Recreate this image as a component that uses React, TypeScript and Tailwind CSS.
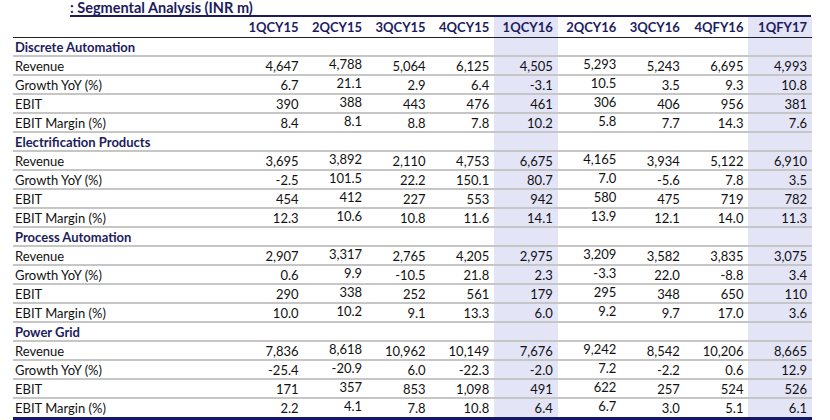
const COLS = ["1QCY15", "2QCY15", "3QCY15", "4QCY15", "1QCY16", "2QCY16", "3QCY16", "4QFY16", "1QFY17"];
const HIGHLIGHT = [4, 8];

type Segment = { name: string; rows: [string, string[]][] };

const SEGMENTS: Segment[] = [
  {
    name: "Discrete Automation",
    rows: [
      ["Revenue", ["4,647", "4,788", "5,064", "6,125", "4,505", "5,293", "5,243", "6,695", "4,993"]],
      ["Growth YoY (%)", ["6.7", "21.1", "2.9", "6.4", "-3.1", "10.5", "3.5", "9.3", "10.8"]],
      ["EBIT", ["390", "388", "443", "476", "461", "306", "406", "956", "381"]],
      ["EBIT Margin (%)", ["8.4", "8.1", "8.8", "7.8", "10.2", "5.8", "7.7", "14.3", "7.6"]],
    ],
  },
  {
    name: "Electrification Products",
    rows: [
      ["Revenue", ["3,695", "3,892", "2,110", "4,753", "6,675", "4,165", "3,934", "5,122", "6,910"]],
      ["Growth YoY (%)", ["-2.5", "101.5", "22.2", "150.1", "80.7", "7.0", "-5.6", "7.8", "3.5"]],
      ["EBIT", ["454", "412", "227", "553", "942", "580", "475", "719", "782"]],
      ["EBIT Margin (%)", ["12.3", "10.6", "10.8", "11.6", "14.1", "13.9", "12.1", "14.0", "11.3"]],
    ],
  },
  {
    name: "Process Automation",
    rows: [
      ["Revenue", ["2,907", "3,317", "2,765", "4,205", "2,975", "3,209", "3,582", "3,835", "3,075"]],
      ["Growth YoY (%)", ["0.6", "9.9", "-10.5", "21.8", "2.3", "-3.3", "22.0", "-8.8", "3.4"]],
      ["EBIT", ["290", "338", "252", "561", "179", "295", "348", "650", "110"]],
      ["EBIT Margin (%)", ["10.0", "10.2", "9.1", "13.3", "6.0", "9.2", "9.7", "17.0", "3.6"]],
    ],
  },
  {
    name: "Power Grid",
    rows: [
      ["Revenue", ["7,836", "8,618", "10,962", "10,149", "7,676", "9,242", "8,542", "10,206", "8,665"]],
      ["Growth YoY (%)", ["-25.4", "-20.9", "6.0", "-22.3", "-2.0", "7.2", "-2.2", "0.6", "12.9"]],
      ["EBIT", ["171", "357", "853", "1,098", "491", "622", "257", "524", "526"]],
      ["EBIT Margin (%)", ["2.2", "4.1", "7.8", "10.8", "6.4", "6.7", "3.0", "5.1", "6.1"]],
    ],
  },
];

const GRID = "grid grid-cols-[227px_repeat(9,1fr)]";

function Cell({ i, children, header }: { i: number; children?: React.ReactNode; header?: boolean }) {
  const hl = HIGHLIGHT.includes(i);
  // the 2Q columns sit a touch higher in the sheet
  const lifted = (i === 1 || i === 5) && !header;
  return (
    <div
      className={`flex justify-end pr-[5px] ${header ? "items-end pb-[3px]" : "items-center pt-[1px]"} ${
        hl ? "bg-[#e4e4f7]" : ""
      } ${header ? "font-bold text-[#1c1c5e]" : "text-[#111]"}`}
    >
      <span className={lifted ? "-translate-y-[2px]" : ""}>{children}</span>
    </div>
  );
}

export default function App() {
  const last = SEGMENTS.length - 1;
  return (
    <div
      className="w-[830px] h-[420px] bg-white overflow-hidden text-[13px] leading-none"
      style={{ fontFamily: "Lato, 'Open Sans', sans-serif" }}
    >
      <div className="ml-[70px] w-[741px] h-[17px] border-b-2 border-[#1c1c5e] font-bold text-[#1c1c5e] text-[14.5px] pt-[1px]">
        : Segmental Analysis (INR m)
      </div>
      <div className="ml-[13px] w-[799px]">
        <div className={`${GRID} h-[21px] border-b border-[#222]`}>
          <div />
          {COLS.map((c, i) => (
            <Cell key={c} i={i} header>
              {c}
            </Cell>
          ))}
        </div>
        {SEGMENTS.map((seg, si) => (
          <div key={seg.name}>
            <div className={`${GRID} h-[19px] border-b-2 border-[#c6c6c6]`}>
              <div className="flex items-center pt-[1px] pl-[2px] font-bold text-[#1c1c5e]">{seg.name}</div>
              {COLS.map((c, i) => (
                <Cell key={c} i={i} />
              ))}
            </div>
            {seg.rows.map(([label, vals], ri) => {
              const isLast = si === last && ri === seg.rows.length - 1;
              return (
                <div
                  key={label}
                  className={`${GRID} ${
                    isLast ? "h-[21px] border-b-[3px] border-[#15156a]" : "h-[19px] border-b-2 border-[#c6c6c6]"
                  }`}
                >
                  <div className="flex items-center pt-[1px] pl-[2px] text-[#111]">{label}</div>
                  {vals.map((v, i) => (
                    <Cell key={i} i={i}>
                      {v}
                    </Cell>
                  ))}
                </div>
              );
            })}
          </div>
        ))}
      </div>
    </div>
  );
}
